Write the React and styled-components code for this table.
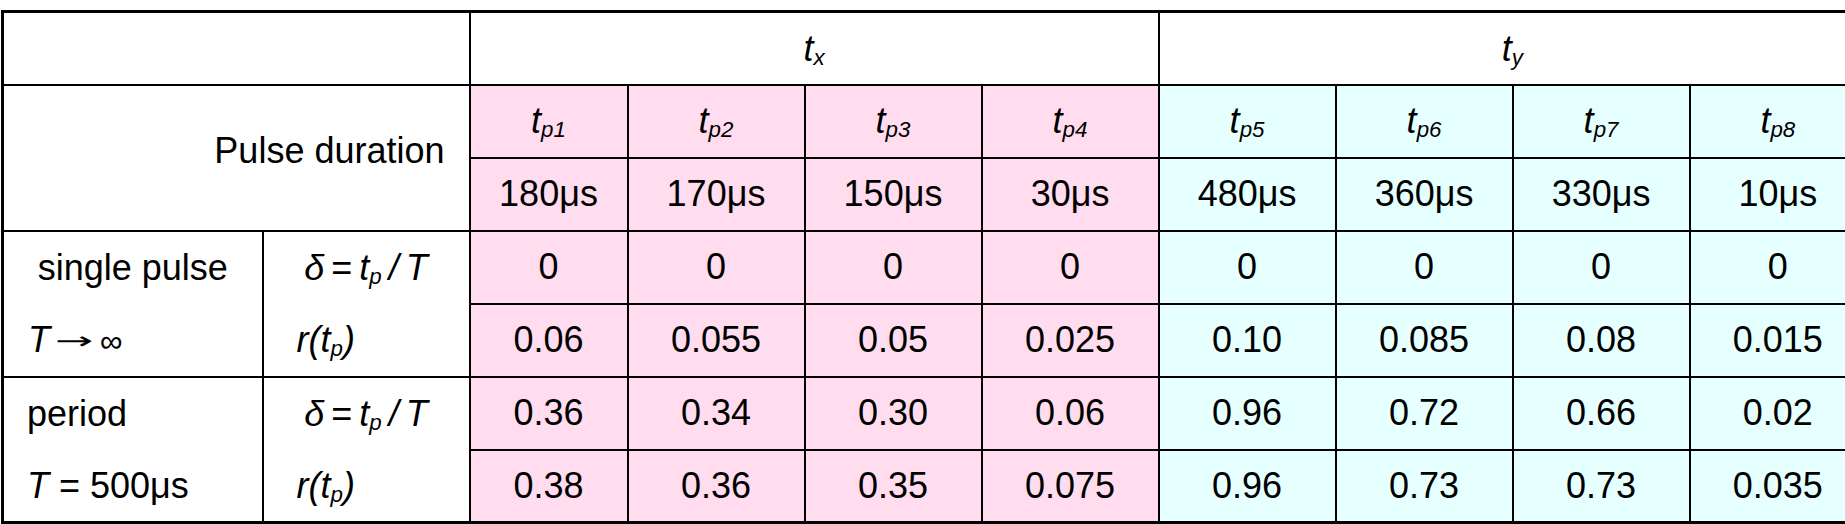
import React from 'react'
import styled, { createGlobalStyle, css } from 'styled-components'

const GlobalStyle = createGlobalStyle`
  html, body {
    margin: 0;
    padding: 0;
    background: #ffffff;
    overflow: hidden;
  }
  body {
    font-family: 'Liberation Sans', Arial, sans-serif;
    color: #000000;
  }
`

const tones = {
  pink: '#ffdcee',
  cyan: '#e6ffff',
}

const Sheet = styled.div`
  padding: 10px 0 0 1px;
  width: 1900px;
`

const Grid = styled.table`
  border-collapse: collapse;
  table-layout: fixed;
  width: 1866px;
  font-size: 36px;
  border: 3px solid #000;
`

const Row = styled.tr`
  height: 73px;
`

const Cell = styled.td`
  padding: 0;
  border: 2px solid #000;
  text-align: ${p => p.$align || 'center'};
  vertical-align: middle;
  white-space: nowrap;
  line-height: 1.15;
  background: ${p => tones[p.$tone] || '#ffffff'};
  ${p => p.$inset && css`padding-left: ${p.$inset}px;`}
  ${p => p.$openBottom && css`border-bottom: none;`}
  ${p => p.$openTop && css`border-top: none;`}
`

const Caption = styled(Cell)`
  text-align: right;
  padding: 0 24px 14px 0;
`

const Var = styled.span`
  font-style: italic;
`

const Sub = styled.sub`
  font-size: 0.62em;
  font-style: italic;
  vertical-align: -0.16em;
  line-height: 0;
`

const Formula = styled.span`
  word-spacing: -3px;
`

const Arrow = styled.span`
  display: inline-block;
  width: 36px;
  margin: 0 9px 0 5px;
  font-family: 'DejaVu Sans', sans-serif;
  font-size: 24px;
  vertical-align: 0.12em;
  transform: scaleX(1.9);
  transform-origin: left center;
`

const Infinity = styled.span`
  font-size: 0.88em;
`

const Tp = ({ n }) => (
  <Var>t<Sub>p{n}</Sub></Var>
)

const Duty = () => (
  <Formula>
    <Var>δ</Var> = <Var>t<Sub>p</Sub></Var> <Var>/</Var> <Var>T</Var>
  </Formula>
)

const Ratio = () => (
  <Var>r(t<Sub>p</Sub>)</Var>
)

const columns = [
  { n: 1, tone: 'pink', us: '180', single: '0.06', dutyP: '0.36', ratioP: '0.38' },
  { n: 2, tone: 'pink', us: '170', single: '0.055', dutyP: '0.34', ratioP: '0.36' },
  { n: 3, tone: 'pink', us: '150', single: '0.05', dutyP: '0.30', ratioP: '0.35' },
  { n: 4, tone: 'pink', us: '30', single: '0.025', dutyP: '0.06', ratioP: '0.075' },
  { n: 5, tone: 'cyan', us: '480', single: '0.10', dutyP: '0.96', ratioP: '0.96' },
  { n: 6, tone: 'cyan', us: '360', single: '0.085', dutyP: '0.72', ratioP: '0.73' },
  { n: 7, tone: 'cyan', us: '330', single: '0.08', dutyP: '0.66', ratioP: '0.73' },
  { n: 8, tone: 'cyan', us: '10', single: '0.015', dutyP: '0.02', ratioP: '0.035' },
]

const widths = [260, 207, 158, 177, 177, 177, 177, 177, 177, 177]

const DataCells = ({ field, render }) => columns.map(c => (
  <Cell key={c.n} $tone={c.tone}>{render ? render(c) : c[field]}</Cell>
))

export default function App() {
  return (
    <Sheet>
      <GlobalStyle />
      <Grid>
        <colgroup>
          {widths.map((w, i) => <col key={i} style={{ width: w }} />)}
        </colgroup>
        <tbody>
          <Row>
            <Cell colSpan={2} />
            <Cell colSpan={4}><Var>t<Sub>x</Sub></Var></Cell>
            <Cell colSpan={4}><Var>t<Sub>y</Sub></Var></Cell>
          </Row>
          <Row>
            <Caption colSpan={2} rowSpan={2}>Pulse duration</Caption>
            <DataCells render={c => <Tp n={c.n} />} />
          </Row>
          <Row>
            <DataCells render={c => `${c.us}μs`} />
          </Row>
          <Row>
            <Cell $openBottom>single pulse</Cell>
            <Cell $openBottom><Duty /></Cell>
            <DataCells render={() => '0'} />
          </Row>
          <Row>
            <Cell $openTop $align="left" $inset={24}>
              <Var>T</Var><Arrow>→</Arrow><Infinity>∞</Infinity>
            </Cell>
            <Cell $openTop $align="left" $inset={33}><Ratio /></Cell>
            <DataCells field="single" />
          </Row>
          <Row>
            <Cell $openBottom $align="left" $inset={23}>period</Cell>
            <Cell $openBottom><Duty /></Cell>
            <DataCells field="dutyP" />
          </Row>
          <Row>
            <Cell $openTop $align="left" $inset={23}>
              <Var>T</Var> = 500μs
            </Cell>
            <Cell $openTop $align="left" $inset={33}><Ratio /></Cell>
            <DataCells field="ratioP" />
          </Row>
        </tbody>
      </Grid>
    </Sheet>
  )
}
